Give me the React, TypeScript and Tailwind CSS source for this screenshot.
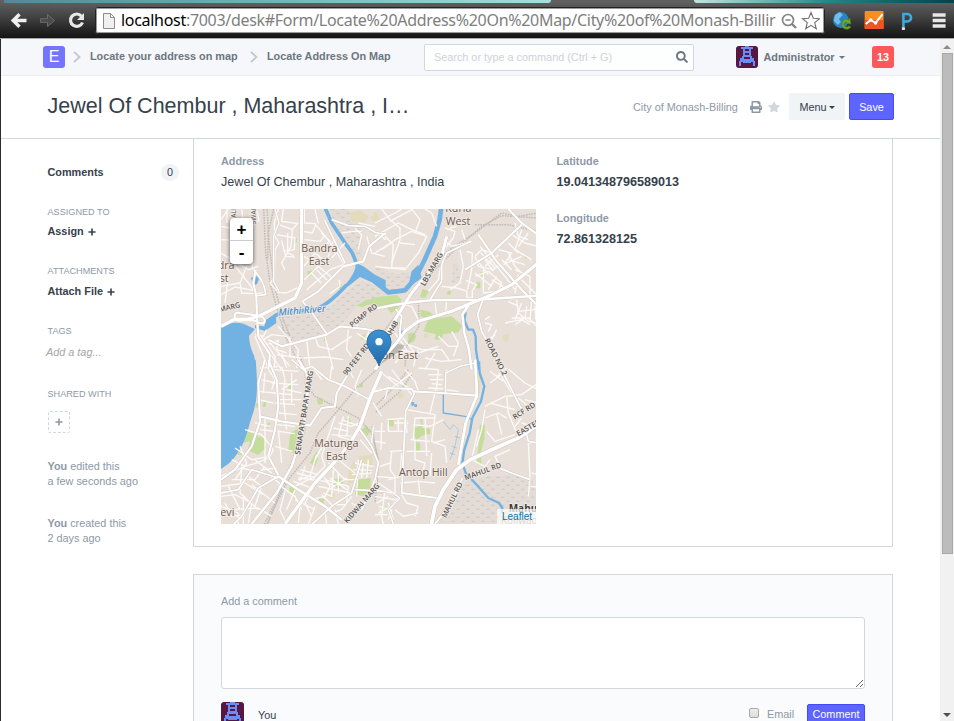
import React from "react";
import { FaPrint, FaStar, FaSearch } from "react-icons/fa";

const arial = "font-['Liberation_Sans',Arial,sans-serif]";

/* ---------- map data, one set of shapes per tile ---------- */

type Tile = {
  at: string;
  parks: string[];
  sand: string[];
  marsh: string[];
  water: string[];
  streams: [string, number][];
  rails: string[];
  minor: string[];
  major: [string, number][];
};

const tiles: Tile[] = [
  {
    at: "translate(-18 -18)",
    parks: [
      "M277 205L300 202L280 225Z",
      "M368 250l10-8 4 8-8 10Z",
      "M424 308L455 290L512 284L512 308Q470 300 440 312Z",
      "M438 398l12-4 0 12-10 4Z",
      "M328 404l8 0-2 10-8 0Z",
      "M238 106l8 0-2 14-8 0Z",
    ],
    sand: ["M404 28L438 22L460 40L450 60L410 55Z", "M464 42l20-6 6 12-16 8Z"],
    marsh: [
      "M200 345L265 305L300 340L335 385L250 425L200 400Z",
      "M270 325L350 310L400 262L440 235L512 260L512 285L430 305L370 375L330 385Z",
      "M340 18L400 18L440 70L440 160L425 180L395 130Z",
    ],
    water: [
      "M18 367Q55 355 85 362L120 378L102 398Q103 430 118 460L122 500L18 500Z",
      "M388 248Q420 215 424 180L445 190L480 215L512 232L512 268L470 238L435 222L400 250Z",
      "M108 224L122 217L132 228L126 243L114 248Z",
      "M152 352L182 335L184 360L150 384L120 375L120 366L148 370Z",
    ],
    streams: [
      ["M330 14L350 60L390 120L412 150L430 195", 11],
      ["M150 360L185 335Q230 322 290 322Q335 312 395 245", 11],
    ],
    rails: [
      "M146 18L148 60L152 150L165 240L190 330L215 410L262 500",
      "M156 18L162 120L178 250L205 350L240 440",
      "M176 18L160 90L158 170",
    ],
    minor: [
      "M18 70L45 75M18 110L60 112L60 140M18 150L100 200L130 190M18 190L60 188L125 272L145 270",
      "M18 250L75 240L95 190M75 240L80 270L115 272M40 220L30 300M18 275L60 252L115 262",
      "M18 50L40 18M36 18L36 60M80 18L84 50M110 18L112 200M125 18L132 52L110 70",
      "M190 18L178 60L180 100L192 120L180 140L178 225L165 240L190 268L215 270L255 250",
      "M205 18L200 55L250 62M192 65L232 80L228 130L200 180L210 200M232 80L248 60",
      "M186 95L240 105L238 140L205 145M200 112L212 160L240 162M218 90L218 150L236 158",
      "M268 18L268 60L300 62L355 130L388 185M300 18L310 62M265 85L292 90L302 66",
      "M268 110L315 115L330 98M268 160L280 170L330 175L345 150M262 195L300 150L336 180",
      "M268 230L310 190L352 225M290 210L318 240M305 200L340 235M275 260L345 200L385 185",
      "M380 90L415 85L440 85M390 120L350 165M362 110L330 140M318 90L345 115L332 125",
      "M420 75L440 95L430 140M455 100L470 150L510 160M470 80L512 110M430 60L480 70",
      "M120 395L145 400L155 380M145 410L170 395L215 400M155 425L190 412L185 440L215 450",
      "M150 430L200 500M165 420L225 490M120 400L160 495M135 395L180 460L178 495M185 455L240 462",
      "M190 370L215 400L250 440L245 495M200 450L215 495M225 400L225 460L260 465",
      "M265 465L330 462L385 470M330 400L355 500M400 380L395 440L410 460M425 390L455 410L462 380",
      "M300 400L310 430L350 440L410 400M275 410L285 495M345 272L375 250L372 230M440 330L425 370",
    ],
    major: [
      ["M260 18L260 240L240 285L180 315L130 340L100 348L60 348L18 370", 9],
      ["M60 345Q55 325 75 330L140 340Q155 350 145 362Q130 360 118 352L85 352Q60 356 60 345", 6],
      ["M122 200L115 240L124 280L126 345L130 400L165 455L160 500", 6],
      ["M262 295L310 265L385 190L445 175L462 130L512 90", 6],
      ["M350 50L400 68L450 70L480 88L512 95", 5],
      ["M328 50L390 180M262 295L285 320L335 392", 5],
      ["M160 410L200 430L335 395L375 370L450 378L512 390", 6],
      ["M115 200Q150 235 152 275L125 278", 5],
      ["M180 18L192 60L176 100L176 235L192 265", 4],
    ],
  },
  {
    at: "translate(462 -18)",
    parks: [
      "M-10 285L65 275L80 290L70 315L50 330L35 315L-10 310Z",
      "M137 320L160 325L190 345L230 340L262 368L250 388L190 395L145 385L160 350L136 338Z",
      "M98 392L112 388L124 398L118 415L98 424Z",
      "M142 258L162 265L150 285L135 282Z",
      "M304 238l12 0 0 18-14 0Z",
      "M316 208l10-2 2 12-10 2Z",
      "M216 266l12-4 0 12-10 2Z",
      "M448 160l8-2 2 6-8 3Z",
      "M182 392L205 390L200 408L180 410Z",
    ],
    sand: ["M-5 25L8 30L12 50L0 55Z", "M382 398L400 392L402 412L388 416Z", "M146 392l14 0 0 12-12 0Z"],
    marsh: [
      "M0 185L60 215L110 205L130 190L100 255L40 270L0 230Z",
      "M0 235L35 275L0 282Z",
      "M235 185L248 178L250 205L260 215L245 240L230 240Z",
    ],
    water: ["M110 205L130 185L140 225L112 245Q95 268 60 272L100 250Z", "M76 384l10-2 2 10-12 2Z"],
    streams: [
      ["M199 10L194 50L180 100L150 168L122 225L90 262L40 268L0 235", 14],
      ["M272 328L268 352L280 380L294 380L302 400L303 440L312 500", 7],
    ],
    rails: [
      "M490 30L430 40L380 30L300 90L230 135L150 210",
      "M490 45L380 38L320 70L235 145L130 250L30 380",
      "M300 65L400 65L490 85",
      "M130 290L132 370L95 430L90 490",
    ],
    minor: [
      "M0 60L60 30L80 18M0 100L70 60L110 80L150 95M20 18L45 50L75 75L75 110L50 180",
      "M20 140L60 110L110 85L155 100L130 150L90 200L50 195M45 55L110 20M110 18L135 50L120 90",
      "M0 190L40 195L90 195M0 150L55 115M150 18L170 30L185 70M30 100L55 125L50 195M75 120L120 125",
      "M210 75L240 85L235 105L210 135M245 70L225 75M205 110L230 130L290 115M260 80L270 110",
      "M255 140L265 190L255 240L225 260M200 180L190 230L160 265M275 145L292 150L290 200L278 260",
      "M200 250L245 255L278 265M180 300L185 335M215 290L212 335M275 265L276 285L292 285L292 262L305 245L272 232",
      "M300 160L320 140L350 150L375 185L355 200L310 190L300 160M315 130L390 220M330 190L370 155",
      "M305 170L340 215M330 170L355 205M318 150L360 195M340 205L300 220M325 200L325 270M300 210L350 250",
      "M370 140L410 150L390 180M410 95L450 120L490 130M400 120L430 150M420 60L430 100L460 110",
      "M440 80L420 140L470 170M430 130L460 90M400 170L450 185M385 185L440 160M410 200L380 170",
      "M340 205L380 240L370 265L325 270M350 230L400 260M365 220L340 260M390 220L420 260",
      "M400 150L420 190L440 210M420 200L465 220L465 280M440 230L490 280M430 215L420 270",
      "M425 290L430 330L460 355L490 360M400 295L430 310M430 325L475 320L490 315M410 345L460 345L485 370",
      "M390 360L440 350L465 365M440 300L420 350M470 290L465 350M455 310L450 345L420 365M480 300L482 350",
      "M330 360L350 365L340 385M360 395L340 410M330 350L345 340M365 380L350 410",
      "M75 300L110 310L130 350L90 380M60 390L95 440L60 480M100 425L140 440L200 440L225 475",
      "M70 440L130 450L190 430M130 440L115 490M150 465L200 475L260 470M80 400L120 450M40 455L95 450M180 450L150 500",
      "M230 385L250 420L235 460M190 400L220 430L250 430M90 375L75 410",
    ],
    major: [
      ["M215 100L200 160L110 270L60 350L30 400", 9],
      ["M288 115L215 150L200 185L200 235L165 290", 5],
      ["M400 18L440 60L495 100M440 65L350 150L270 200", 6],
      ["M310 95L365 175L440 260L490 310", 6],
      ["M-5 318L60 305L110 298L170 292L310 290L490 278", 7],
      ["M495 175L410 245L350 275L230 325L130 355L90 385L60 425L20 470L0 500", 9],
      ["M62 318L80 340L75 380L75 405", 5],
      ["M285 300L262 335L268 390L282 440L290 500", 7],
      ["M325 285L308 335L320 385L345 430L385 500", 5],
    ],
  },
  {
    at: "translate(-18 462)",
    parks: [
      "M110 215L150 225L153 255L130 275L98 262Z",
      "M92 205L122 212L108 235L78 240L85 222Z",
      "M305 108L322 105L324 122L310 125Z",
      "M226 210L250 195L248 225L238 272L220 262Z",
      "M220 60l12-4-2 22-10 0Z",
      "M285 300L306 262L308 290L300 310Z",
      "M425 350L468 345L465 375L450 400L420 395Z",
      "M392 168L405 165L408 180L392 178Z",
      "M440 200L455 188L468 205L455 220Z",
      "M356 350Q370 340 384 352Q388 374 370 376Q352 370 356 350Z",
      "M432 62l12-2 0 12-10 2Z",
      "M158 180l8 0-4 14-6 0Z",
      "M70 262l14 0-2 14-12 0Z",
      "M454 316l12 2-2 14-12-2Z",
      "M145 118l10-2-4 16-8 0Z",
      "M225 370l16 6-8 16-12-6Z",
      "M312 405l16 4-4 14-14-6Z",
      "M123 120l8 0-2 14-8 0Z",
    ],
    sand: ["M400 320L420 290L425 350L400 365Z", "M430 280L472 275L472 308L432 305Z", "M335 395l14-10 10 12-12 12Z"],
    marsh: [],
    water: ["M10-10L122-10Q128 60 125 95Q122 135 105 178L102 190Q95 215 85 240Q60 295 18 318Z"],
    streams: [],
    rails: [
      "M255-20L270 20L275 110L270 200L245 270L200 380L150 500",
      "M262 150L260 220L225 310L190 400L140 500",
      "M490 15L420 80L370 140L310 210L285 270L220 350L175 440L150 500",
      "M270 60L300 100L370 135L430 165L470 210L490 290L485 380",
    ],
    minor: [
      "M175 20L250 25M170 60L250 65M178 90L230 95M180 120L240 125M190 150L245 155M185 185L240 190",
      "M140 50L180 60M130 85L180 90M130 110L175 120M135 200L180 205M120 180L165 190M190 205L240 212M180 250L232 265",
      "M200 10L210 50L205 100L215 200M230 30L230 120M190 200L200 300M150 30L145 90M150 160L150 300",
      "M90 200L140 215L175 260L165 280L110 290L60 255M75 250L95 300L60 350M50 290L90 310L125 300L160 285",
      "M18 340L80 315L160 335L205 370M18 370L90 360L145 395M18 400L60 395L110 420L100 480M18 430L70 450L70 485",
      "M40 370L75 440M80 310L75 390L130 440M50 350L120 350L150 310M100 340L140 370L120 430M60 440L130 435L170 460",
      "M85 395L85 485M110 365L180 420M30 420L50 460L90 455M120 290L170 330M140 320L185 315",
      "M135 15L190 10M155 10L180 50L170 80M245 50L200 80M215 80L260 90M195 110L260 110",
      "M290 10L320 50M350 10L345 50M400 15L415 45M440 20L420 70L430 100",
      "M360 160L340 220L320 280L330 310L300 340L240 370M385 160L370 220L405 230L430 210M370 180L410 190L430 180",
      "M380 170L435 190M400 160L395 220M355 195L400 205M350 215L415 220M330 235L300 290M435 230L470 270",
      "M305 275L285 340L250 350M340 300L390 350L420 350M355 320L350 400L325 390M370 290L420 330",
      "M330 350L400 370L395 420M310 370L410 390M320 330L345 370L330 400L290 410M370 330L370 390M345 345L395 380M350 375L395 345",
      "M420 300L475 310M410 335L470 330M415 320L470 322M430 290L425 400M445 300L440 345M460 290L455 345",
      "M245 330L300 345M250 345L330 355L360 370M235 355L290 375M255 320L310 335M270 310L255 355",
      "M190 365L240 400L260 440M210 385L195 440L215 483M240 380L215 440M300 360L270 420L290 460",
      "M300 405L350 450L380 440L410 400M320 395L350 425L390 425M330 440L335 485M360 440L370 483M410 420L440 440",
      "M475 190L470 240M480 205L510 205M480 235L512 240M500 180L498 260M485 330L483 360M475 120L500 160",
      "M240 410L300 440M280 390L255 430L250 480M300 430L280 483",
    ],
    major: [
      ["M150-10L130 60L135 175L110 250L60 320L18 350", 6],
      ["M160-10L185 50L190 130L180 200L160 280L190 335", 6],
      ["M135 160L200 175L285 188L320 135L360 130L365 90L410 15", 6],
      ["M230-10L265 20L290 10L340 50L390 70L460 108", 5],
      ["M250-10L275 30L278 110L260 220L230 310L185 390L110 483", 7],
      ["M500 25L465 105L435 190L405 240L370 285L300 360L210 483", 10],
      ["M190 340L250 380L330 430L380 470", 7],
      ["M190 340L130 375L80 460L55 485M190 345L110 320L70 380L18 390", 5],
      ["M435 200L470 250L490 300L480 350L460 400L440 440", 5],
      ["M420 380L512 385M440 290L410 390L350 430L290 485", 5],
    ],
  },
  {
    at: "translate(462 462)",
    parks: [
      "M115 195L140 188L135 168L142 168L142 195L165 197L165 213L140 218L124 232L118 215Z",
      "M118 235L135 240L136 262L122 264Z",
      "M315 185L330 185L328 225L320 260L318 300L325 305L305 300L310 250Z",
      "M42 170l14 0 0 20-14 0Z",
      "M22 432l12-2 0 12-10 0Z",
      "M88 64l8-2 0 10-8 0Z",
    ],
    sand: ["M305 18L318 40L315 90L306 95Z", "M66 92l16-4 4 14-14 6Z"],
    marsh: [
      "M275 350L340 340L420 335L470 350L490 400L490 485L200 485L240 420Z",
      "M210 430L230 400L200 483L180 483Z",
    ],
    water: ["M108 118l8-2 2 10-8 4ZM118 124l8 0 0 8-8 0Z"],
    streams: [
      ["M312-5L314 30L328 70L318 115L292 165L284 210L268 260L262 300L272 330L300 360L340 405L372 420L382 435L380 450", 7],
      ["M205 90L205 150L270 160L292 170", 4],
      ["M205 175L225 200L235 185L250 200L240 250L225 290M240 220L255 225M230 250L245 255M225 270L240 275", 1.5],
    ],
    rails: ["M100 20L60 70L0 130M110 35L70 90L0 150", "M-10 190L10 300L0 420"],
    minor: [
      "M130 15L190 20L185 70L165 150M160 35L200 35M165 50L205 50M170 62L200 65M160 75L205 77M215 20L210 80L250 85",
      "M40 40L130 90M90 20L120 55L130 85M0 80L50 75L110 30M50 20L110 95M20 30L70 70M40 70L30 110",
      "M95 140L180 155L180 165L120 165L115 230M115 185L165 190L205 170M150 165L155 280M180 160L170 235L210 250L215 300",
      "M105 230L165 235M95 265L165 265M120 230L120 290L150 300L140 340M175 240L210 230M170 270L165 340",
      "M35 170L95 165M40 175L40 205L90 205M70 170L70 205M58 180L100 180M95 170L95 210",
      "M50 265L45 320L60 340L60 390M45 265L90 262M45 300L15 310M80 270L75 340L40 350",
      "M0 340L60 345M10 360L70 400L50 430L10 450M0 400L60 410M30 380L20 460M10 430L50 440L40 470",
      "M0 380L50 390M5 420L40 400M0 455L40 455M15 440L25 483M40 420L55 470",
      "M80 395L95 420L130 430L120 460M60 440L85 460L130 450M130 350L135 395M75 360L130 355L180 360",
      "M330 130L390 100L440 95M330 165L370 150L395 165M335 205L360 235L420 215M395 100L400 150L425 210",
      "M345 120L420 140M330 140L320 200L305 250M365 150L380 215M385 30L345 60M400 18L450 60L490 80",
      "M440 95L490 60M430 105L460 130M450 110L490 120M345 25L385 55M365 40L395 15M410 90L380 40",
      "M310 200L290 290L330 310L345 290M405 260L360 280L370 300M440 180L490 195M455 225L460 240L490 240",
      "M460 240L465 340L460 400M470 330L490 335M465 370L485 372M440 165L420 190",
    ],
    major: [
      ["M300-10L305 70L305 100L272 180L250 305", 8],
      ["M115 85L200 90L305 98", 6],
      ["M-10 88L40 75L110 78L118 92L92 145L88 230L85 280L80 390L185 405", 5],
      ["M490 185L430 225L350 260L285 290L245 320L205 380L180 430L168 490", 11],
      ["M360 310L410 330L465 350M262 345L230 420L180 483", 5],
      ["M365-10L400 60L435 130L450 150M455 215L460 235L490 240", 5],
      ["M212 90L212 30L255 10L300 0", 4],
      ["M60 395L75 405L40 440L55 483", 4],
    ],
  },
];

function Label({ x, y, children, size = 32, rotate = 0, color = "#6d5b51", weight = 400, italic = false, anchor = "middle" }: {
  x: number; y: number; children: string; size?: number; rotate?: number; color?: string; weight?: number; italic?: boolean; anchor?: "start" | "middle" | "end";
}) {
  return (
    <text
      transform={`translate(${x} ${y}) rotate(${rotate})`}
      textAnchor={anchor}
      fontSize={size}
      fontWeight={weight}
      fontStyle={italic ? "italic" : "normal"}
      fill={color}
      stroke="#f3ece6"
      strokeWidth={5}
      strokeLinejoin="round"
      paintOrder="stroke"
    >
      {children}
    </text>
  );
}

function MapCanvas() {
  const each = (draw: (t: Tile) => React.ReactNode) =>
    tiles.map((t) => <g key={t.at} transform={t.at}>{draw(t)}</g>);
  return (
    <svg viewBox="0 0 945 945" className="block h-[315px] w-[315px] font-['Open_Sans','Noto_Sans',sans-serif]">
      <defs>
        <pattern id="marsh" width="30" height="24" patternUnits="userSpaceOnUse">
          <rect width="30" height="24" fill="#e3dbd4" />
          <path d="M4 7h10M19 19h9" stroke="#bcc6cb" strokeWidth="2.500" />
        </pattern>
        <linearGradient id="pin" x1="0" y1="0" x2="0" y2="1">
          <stop offset="0" stopColor="#3f93d1" />
          <stop offset="1" stopColor="#2268a8" />
        </linearGradient>
      </defs>
      <rect width="945" height="945" fill="#e8dfd8" />
      {each((t) => t.marsh.map((d, i) => <path key={i} d={d} fill="url(#marsh)" />))}
      {each((t) => (
        <>
          {t.sand.map((d, i) => <path key={i} d={d} fill="#e3dcbc" />)}
          {t.parks.map((d, i) => <path key={i} d={d} fill="#c4dd9c" />)}
          {t.water.map((d, i) => <path key={i} d={d} fill="#71b2e3" />)}
          {t.streams.map(([d, w], i) => <path key={i} d={d} fill="none" stroke="#71b2e3" strokeWidth={w} strokeLinejoin="round" />)}
        </>
      ))}
      {each((t) => t.rails.map((d, i) => <path key={i} d={d} fill="none" stroke="#c2bcb8" strokeWidth={4.5} strokeDasharray="5 3" />))}
      {each((t) => t.minor.map((d, i) => <path key={i} d={d} fill="none" stroke="#fcfaf9" strokeWidth={4} strokeLinejoin="round" />))}
      {each((t) => t.major.map(([d, w], i) => <path key={i} d={d} fill="none" stroke="#cfc5bd" strokeWidth={w + 3} strokeLinejoin="round" />))}
      {each((t) => t.major.map(([d, w], i) => <path key={i} d={d} fill="none" stroke="#ffffff" strokeWidth={w + 0.5} strokeLinejoin="round" />))}

      <Label x={295} y={128}>Bandra</Label>
      <Label x={294} y={167}>East</Label>
      <Label x={712} y={10}>Kurla</Label>
      <Label x={711} y={49}>West</Label>
      <Label x={-10} y={181} anchor="start">dra</Label>
      <Label x={-4} y={219} anchor="start">st</Label>
      <Label x={524} y={451}>Sion East</Label>
      <Label x={346} y={714}>Matunga</Label>
      <Label x={346} y={753}>East</Label>
      <Label x={607} y={800}>Antop Hill</Label>
      <Label x={-10} y={922} anchor="start">levi</Label>
      <Label x={863} y={909} anchor="start" weight={700} color="#3a3a3a" size={30}>Mahul</Label>
      <Label x={840} y={945} anchor="start" color="#77706b" size={30}>Koliwada</Label>
      <Label x={244} y={314} rotate={-5} size={29} italic color="#4b8fc4" weight={600}>Mithi River</Label>
      <Label x={-4} y={309} rotate={-13} size={22} anchor="start" color="#555" weight={600}>MARG</Label>
      <Label x={432} y={325} rotate={-38} size={22} color="#555" weight={600}>PGMP RD</Label>
      <Label x={412} y={455} rotate={-52} size={22} color="#555" weight={600}>90 FEET RD</Label>
      <Label x={519} y={365} rotate={-60} size={22} color="#555" weight={600}>AH48</Label>
      <Label x={639} y={184} rotate={-60} size={22.5} color="#555" weight={600}>LBS MARG</Label>
      <Label x={818} y={447} rotate={63} size={22} color="#555" weight={600}>ROAD NO.2</Label>
      <Label x={257} y={612} rotate={-81} size={22.5} color="#555" weight={600}>SENAPATI BAPAT MARG</Label>
      <Label x={428} y={888} rotate={-49} size={22} color="#555" weight={600}>KIDWAI MARG</Label>
      <Label x={700} y={876} rotate={-64} size={22} color="#555" weight={600}>MAHUL RD</Label>
      <Label x={788} y={794} rotate={-20} size={22} color="#555" weight={600}>MAHUL RD</Label>
      <Label x={913} y={612} rotate={-33} size={22} color="#555" weight={600}>RCF RD</Label>
      <Label x={892} y={682} rotate={-30} size={22} anchor="start" color="#555" weight={600}>EASTERN</Label>
      <Label x={44} y={26} rotate={-90} size={20} anchor="start" color="#555">ALI</Label>
      <Label x={104} y={46} rotate={-90} size={20} anchor="start" color="#555">SWAMI</Label>

      <path d="M474 469L540 425L552 408L530 405Z" fill="#000" opacity=".18" />
      <path d="M474 471C469 449 438 424 438 399A36 36 0 0 1 510 399C510 424 479 449 474 471Z" fill="url(#pin)" stroke="#2a6fa9" strokeWidth="3" />
      <circle cx="474" cy="398" r="11" fill="#fff" />
    </svg>
  );
}

function Avatar({ className }: { className: string }) {
  return (
    <svg viewBox="0 0 22 22" className={className} shapeRendering="crispEdges">
      <rect width="22" height="22" rx="2" fill="#561742" />
      <path
        fill="#6b8cf5"
        d="M9 0h4v1h4v2h-2v7h1v2h2v3h1v5h-2v-4h-2v1H7v-1H5v4H3v-5h1v-3h2v-2h1V3H5V1h4zM9 3v2h4V3zM9 7v2h4V7zM8 11v2h6v-2z"
      />
    </svg>
  );
}

function Caret({ className }: { className: string }) {
  return <span className={`inline-block border-x-[3px] border-t-[3px] border-x-transparent ${className}`} />;
}

function Chevron() {
  return (
    <svg viewBox="0 0 8 12" className="h-3 w-2" fill="none" stroke="#c0c8d0" strokeWidth="1.800">
      <path d="M1 .8L6.500 6L1 11.200" />
    </svg>
  );
}

function BrowserBar() {
  return (
    <div className="h-[39px] shrink-0 border-b border-[#aaa8a4] bg-linear-to-b from-[#646464] via-[#3e3e3e] to-[#141414]">
      <div className="flex h-[3px] bg-[#606060]">
        <div className="ml-1 h-[2.5px] w-[547px] rounded-br bg-linear-to-r from-[#55879a] via-[#71b5b8] to-[#a8dfdc]" />
        <div className="ml-[143px] h-[2.5px] flex-1 rounded-bl bg-linear-to-r from-[#bfe5df] via-[#1f8b8b] to-[#0b3f50]" />
      </div>
      <div className="flex h-[35px] items-center">
        <svg viewBox="0 0 94 35" className="h-[35px] w-[95px]" fill="none">
          <path d="M26 17.500H13M19 11.200L12.700 17.500L19 23.800" stroke="#f0f0f0" strokeWidth="3.400" />
          <path d="M40 15.700h7v-4.200l7 6-7 6v-4.200h-7z" fill="#4b4b4b" stroke="#6c6c6c" />
          <path d="M81 13.200A6.200 6.200 0 1 0 82 19.500" stroke="#e8e8e8" strokeWidth="3.200" />
          <path d="M83.500 10v7h-7z" fill="#e8e8e8" />
        </svg>
        <div className="flex h-[27px] w-[730px] items-center rounded-[3px] border border-[#222] bg-white outline-1 -outline-offset-2 outline-[#999]">
          <svg viewBox="0 0 12 16" className="ml-[7px] h-4 w-3" fill="#f0f0f0" stroke="#8c8c8c">
            <path d="M.5.500H7.500L11.500 4.500V15.500H.5ZM7.500.500V4.500H11.500" />
          </svg>
          <div className="ml-[6px] w-[657px] overflow-hidden pb-[2px] font-['Noto_Sans','Open_Sans',sans-serif] text-[16px] leading-[22px] tracking-[-0.3px] whitespace-nowrap text-[#7e7e7e]">
            <span className="text-black">localhost</span>:7003/desk#Form/Locate%20Address%20On%20Map/City%20of%20Monash-Billir
          </div>
          <svg viewBox="0 0 40 20" className="ml-[2px] h-5 w-10" fill="none" stroke="#858585">
            <circle cx="8" cy="9" r="5.500" strokeWidth="1.700" />
            <path d="M12 13l4 4" strokeWidth="2.400" />
            <path d="M5.500 9h5" strokeWidth="1.500" />
            <path d="M31 1.500L33.300 7.300L39.500 7.700L34.700 11.700L36.300 17.800L31 14.400L25.700 17.800L27.300 11.700L22.500 7.700L28.700 7.300Z" stroke="#707070" strokeWidth="1.100" />
          </svg>
        </div>
        <svg viewBox="0 0 130 35" className="h-[35px] w-[129px]">
          <circle cx="16" cy="17" r="8" fill="#2785c7" />
          <path d="M10 12l5-3 3 3-4 4 2 3-3 3-4-4z" fill="#76bce9" />
          <path d="M17 20a4.500 4.500 0 0 1 7-3l1-2 1 6-6-1 2-1a3 3 0 0 0-3 3 3 3 0 0 0 5 1l2 1a5 5 0 0 1-9-4z" fill="#6eaa2b" stroke="#4d841c" strokeWidth=".7" />
          <rect x="40" y="8" width="19" height="18" rx="1" fill="#f5901f" />
          <rect x="40" y="17" width="19" height="9" fill="#ed5426" />
          <path d="M41 21l5-4 5 3 7-9" fill="none" stroke="#fff" strokeWidth="2" />
          <circle cx="46" cy="17" r="1.700" fill="#fff" /><circle cx="51" cy="20" r="1.700" fill="#fff" />
          <path d="M79 26V11h4a3.500 3.500 0 0 1 0 7.500H79" fill="none" stroke="#3fa9dc" strokeWidth="2.600" />
          <rect x="77.500" y="24.500" width="3" height="2.500" fill="#e8e8e8" />
          <path d="M108.500 12h13M108.500 17.500h13M108.500 23h13" stroke="#e8e8e8" strokeWidth="3.400" />
        </svg>
      </div>
    </div>
  );
}

function Navbar() {
  return (
    <div className="flex h-[37px] items-center border-b border-[#ebeff2] bg-[#f5f7fa] pl-[42px] text-[10.850px] font-bold text-[#6c7680]">
      <div className="flex size-[22px] items-center justify-center rounded-[3px] bg-[#7574ff] text-base font-normal text-white">E</div>
      <div className="ml-[8px] flex"><Chevron /></div>
      <div className="ml-[9px] w-[147px] pb-[2px] whitespace-nowrap">Locate your address on map</div>
      <div className="ml-[13px] flex"><Chevron /></div>
      <div className="ml-[9px] w-[157px] pb-[2px] whitespace-nowrap">Locate Address On Map</div>
      <div className="flex h-[27px] w-[270px] items-center justify-between rounded-[2px] border border-[#d1d8dd] bg-[#fdfefe] pr-[5px] pl-[9px] font-normal text-[#cdd3d9]">
        <span>Search or type a command (Ctrl + G)</span>
        <FaSearch className="size-3 text-[#6c7680]" />
      </div>
      <Avatar className="ml-[42px] size-[22px] rounded-[3px]" />
      <div className="ml-[5.5px] w-[72.5px] whitespace-nowrap">Administrator</div>
      <Caret className="ml-[3px] border-t-[#6c7680]" />
      <div className="ml-[27px] flex size-[22px] items-center justify-center rounded-[3px] bg-[#ff5858] text-white">13</div>
    </div>
  );
}

function TitleBar() {
  return (
    <div className="flex h-[63px] items-center border-b border-[#d1d8dd] pl-[46.5px] text-[10.850px]">
      <div className="w-[585.5px] pb-[2px] text-[21.500px] leading-7 whitespace-nowrap text-[#36414c]">Jewel Of Chembur , Maharashtra , I…</div>
      <div className="w-[105px] whitespace-nowrap text-[#8d99a6]">City of Monash-Billing</div>
      <FaPrint className="mb-px ml-[12px] size-3 text-[#8d99a6]" />
      <FaStar className="mb-px ml-[6px] size-3 text-[#d1d8dd]" />
      <div className="mb-px ml-[9px] flex h-[27px] w-[56px] items-center justify-center rounded-[2px] bg-[#f0f4f7] pt-px text-[#36414c]">
        Menu<Caret className="ml-[2px] border-t-[#36414c]" />
      </div>
      <div className="mb-px ml-[4px] flex h-[27px] w-[45px] items-center justify-center rounded-[2px] border border-[#444bff] bg-[#5e64ff] pt-px text-white">Save</div>
    </div>
  );
}

function Sidebar() {
  const heading = "h-4 text-[9.150px] leading-4 text-[#8d99a6]";
  const action = "h-4 text-[10.850px] leading-4 font-bold text-[#36414c]";
  return (
    <div className="w-[192px] shrink-0 pt-[25px] pl-[46.5px] text-[10.850px] whitespace-nowrap">
      <div className="flex h-4 items-center justify-between pr-[14px] font-bold text-[#36414c]">
        Comments
        <span className="mt-px flex h-[17px] w-[18px] shrink-0 items-center justify-center rounded-full bg-[#f0f4f7] font-normal">0</span>
      </div>
      <div className={`mt-6 ${heading}`}>ASSIGNED TO</div>
      <div className={`mt-[3px] ${action}`}>Assign <Plus /></div>
      <div className={`mt-6 ${heading}`}>ATTACHMENTS</div>
      <div className={`mt-1 ${action}`}>Attach File <Plus /></div>
      <div className={`mt-6 ${heading}`}>TAGS</div>
      <div className="mt-[5px] -ml-[1.5px] h-4 leading-4 text-[#a5a5a5] italic">Add a tag...</div>
      <div className={`mt-[26px] ${heading}`}>SHARED WITH</div>
      <div className="mt-[9px] flex size-[22px] items-center justify-center rounded-[2px] border border-dashed border-[#d1d8dd] text-[#8d99a6]"><Plus /></div>
      <div className="mt-[26px] leading-[15px] text-[#8d99a6]"><b>You</b> edited this<br />a few seconds ago</div>
      <div className="mt-[27px] leading-[15px] text-[#8d99a6]"><b>You</b> created this<br />2 days ago</div>
    </div>
  );
}

function Plus() {
  return (
    <svg viewBox="0 0 8 8" className="mb-px ml-px inline-block size-2" stroke="currentColor" strokeWidth="1.600">
      <path d="M4 .5V7.500M.5 4H7.500" />
    </svg>
  );
}

function MapWidget() {
  return (
    <div className="relative mt-[19px] h-[315px] w-[315px] overflow-hidden">
      <MapCanvas />
      <div className="absolute top-[9px] left-[9px] w-[23px] rounded-[4px] bg-white text-center text-[17px] font-bold text-black shadow-[0_1px_4px_rgba(0,0,0,0.65)]">
        <div className="h-[23px] border-b border-[#ccc] leading-[24px]">+</div>
        <div className="h-[23px] leading-[23px]">-</div>
      </div>
      <div className="absolute right-0 bottom-0 h-[15px] w-[39px] bg-white/70 pl-[5px] text-[10px] leading-[15px] text-[#0078a8]">Leaflet</div>
    </div>
  );
}

function Field({ label, value, strong }: { label: string; value: string; strong?: boolean }) {
  return (
    <div>
      <div className="h-4 text-[10.850px] leading-4 font-bold text-[#8d99a6]">{label}</div>
      <div className={`mt-[5px] h-4 text-[12.600px] leading-4 text-[#36414c] ${strong ? "font-bold" : ""}`}>{value}</div>
    </div>
  );
}

function CommentBox() {
  return (
    <div className="mt-[27px] h-[160px] w-[700px] border border-[#d1d8dd] bg-[#fafbfc] px-[27px] pt-[18px] text-[10.850px]">
      <div className="h-4 leading-4 text-[#8d99a6]">Add a comment</div>
      <textarea className="mt-2 block h-[72px] w-[644px] resize rounded-[3px] border border-[#d1d8dd] bg-white" />
      <div className="mt-[13px] flex items-start">
        <Avatar className="size-[23px] rounded-[3px]" />
        <div className="mt-[5px] ml-[14px] leading-4 text-[#36414c]">You</div>
        <div className="mt-[6px] ml-auto size-[10px] rounded-[2px] border border-[#a8a8a8] bg-linear-to-b from-[#eee] to-[#ddd]" />
        <div className="mt-1 ml-2 w-10 leading-4 text-[#8d99a6]">Email</div>
        <div className="mt-[2px] flex h-[22px] w-[58px] items-center justify-center rounded-[2px] border border-[#444bff] bg-[#5e64ff] pb-px text-white">Comment</div>
      </div>
    </div>
  );
}

function Scrollbar() {
  return (
    <div className="flex w-[14px] shrink-0 flex-col items-center bg-[#f1f1f1] pt-[6px] pb-[4px]">
      <div className="border-x-[4px] border-b-[4px] border-x-transparent border-b-[#8b8b8b]" />
      <div className="mt-[4px] ml-px h-[501px] w-[11px] border border-[#a8a8a8] bg-[#bcbcbc]" />
      <div className="mt-auto border-x-[4px] border-t-[4px] border-x-transparent border-t-[#505050]" />
    </div>
  );
}

export default function App() {
  return (
    <div className={`flex h-[721px] w-[954px] flex-col overflow-hidden bg-white ${arial}`}>
      <BrowserBar />
      <div className="flex min-h-0 flex-1 border-l border-[#2b2b2b]">
        <div className="w-[939px] shrink-0">
          <Navbar />
          <TitleBar />
          <div className="flex">
            <Sidebar />
            <div>
              <div className="flex h-[408px] w-[700px] border border-t-0 border-[#d1d8dd] pt-[14px] pl-[27px]">
                <div className="w-[335.5px]">
                  <Field label="Address" value="Jewel Of Chembur , Maharashtra , India" />
                  <MapWidget />
                </div>
                <div className="flex flex-col gap-5">
                  <Field label="Latitude" value="19.041348796589013" strong />
                  <Field label="Longitude" value="72.861328125" strong />
                </div>
              </div>
              <CommentBox />
            </div>
          </div>
        </div>
        <Scrollbar />
      </div>
    </div>
  );
}
